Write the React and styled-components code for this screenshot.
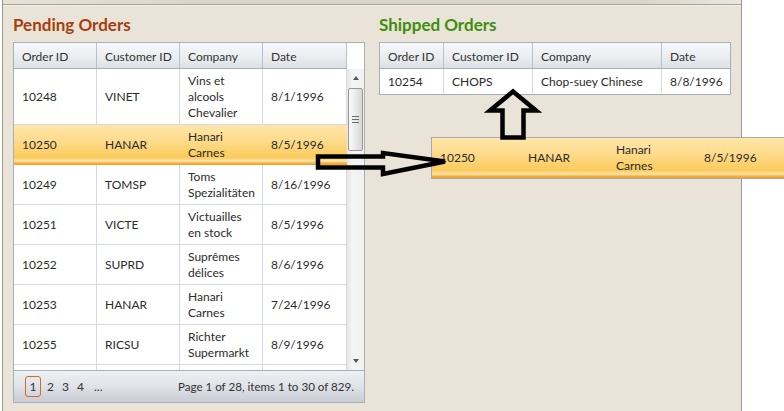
import React from 'react';
import styled, { createGlobalStyle } from 'styled-components';

// shared tones
const lineColor = '#d5dbe5';
const frameColor = '#a6afbc';
const selectedFill =
  'linear-gradient(to bottom, #ffe6a9 0%, #fedb8c 40%, #fbca5a 82%, #fde7b4 90%, #f8b446 95%, #f09a1c 100%)';

const GlobalStyle = createGlobalStyle`
  html, body { margin: 0; padding: 0; background: #f6f3ee; }
  body {
    font-family: Lato, "Open Sans", sans-serif;
    font-size: 12px;
    color: #2b2b2b;
  }
  * { box-sizing: border-box; }
`;

const Stage = styled.div`
  position: relative;
  width: 784px;
  height: 411px;
  overflow: hidden;
  padding-left: 2px;
  background: #fff;
`;

const Window = styled.div`
  width: 740px;
  height: 411px;
  background: #eae3d7;
  border-left: 1px solid #9d9785;
  border-right: 1px solid #9d9785;
  display: flex;
  flex-direction: column;
`;

const TopBar = styled.div`
  height: 5px;
  background: linear-gradient(to right, #e6e2d9, #d9d4c8 30%, #d9d4c8 85%, #e9e7e0);
  border-bottom: 1px solid #a7a190;
  box-shadow: 0 1px 0 #f5f1ea;
`;

const Content = styled.div`
  display: flex;
  gap: 14px;
  padding: 0 10px;
`;

const Panel = styled.div`
  width: 352px;
  display: flex;
  flex-direction: column;
`;

const Title = styled.h2`
  margin: 0 0 7px;
  padding-top: 10px;
  font-size: 17px;
  line-height: 20px;
  font-weight: 700;
  color: ${(p) => p.$color};
`;

const Grid = styled.div`
  border: 1px solid ${frameColor};
  background: #fff;
  display: flex;
  flex-direction: column;
`;

const ScrollArea = styled.div`
  display: flex;
`;

const Table = styled.div`
  width: ${(p) => p.$width}px;
  display: flex;
  flex-direction: column;
`;

const Header = styled.div`
  display: grid;
  grid-template-columns: ${(p) => p.$cols};
  height: 26px;
  border-bottom: 1px solid ${frameColor};
  background: linear-gradient(to bottom, #f7f8fa 0%, #eceef2 50%, #dde0e5 100%);
`;

const HeadCell = styled.div`
  display: flex;
  align-items: center;
  padding: 1px 0 0 8px;
  border-right: 1px solid #b9c0cb;
  color: #333;
  white-space: nowrap;
  &:last-child { border-right: ${(p) => (p.$edge ? '1px solid #b9c0cb' : 'none')}; }
`;

const Body = styled.div`
  height: ${(p) => p.$height}px;
  overflow: hidden;
`;

const Row = styled.div`
  display: grid;
  grid-template-columns: ${(p) => p.$cols};
  height: ${(p) => p.$height}px;
  border-bottom: ${(p) =>
    p.$selected || p.$flat ? 'none' : `1px solid ${lineColor}`};
  background: ${(p) => (p.$selected ? selectedFill : '#fff')};
`;

const Cell = styled.div`
  display: flex;
  flex-direction: column;
  justify-content: center;
  padding-left: 8px;
  line-height: 16px;
  white-space: nowrap;
  overflow: hidden;
  border-right: ${(p) => (p.$plain ? 'none' : `1px solid ${lineColor}`)};
  &:last-child { border-right: ${(p) => (p.$edge ? `1px solid ${lineColor}` : 'none')}; }
`;

const Scrollbar = styled.div`
  width: 17px;
  display: flex;
  flex-direction: column;
`;

const ScrollGap = styled.div`
  height: 26px;
  background: #fff;
`;

const Track = styled.div`
  flex: 1;
  display: flex;
  flex-direction: column;
  background: linear-gradient(to right, #e6e6e6, #f4f4f4 30%, #f2f2f2);
`;

const ArrowBtn = styled.div`
  height: 18px;
  display: flex;
  align-items: center;
  justify-content: center;
  &::before {
    content: '';
    border-left: 3.5px solid transparent;
    border-right: 3.5px solid transparent;
    ${(p) => (p.$down ? 'border-top' : 'border-bottom')}: 4px solid #555;
  }
`;

const Thumb = styled.div`
  height: 63px;
  margin: 1px 1px 0;
  border: 1px solid #979797;
  border-radius: 2px;
  background: linear-gradient(to right, #fafafa, #ececec 45%, #d6d6d6);
  display: flex;
  flex-direction: column;
  align-items: center;
  justify-content: center;
  gap: 2px;
`;

const Grip = styled.span`
  width: 7px;
  height: 1px;
  background: #6a6a6a;
`;

const TrackFill = styled.div`
  flex: 1;
`;

const Pager = styled.div`
  height: 32px;
  border-top: 1px solid ${frameColor};
  background: linear-gradient(to bottom, #eef0f3 0%, #dfe2e7 50%, #c8ccd3 100%);
  display: flex;
  align-items: center;
  padding: 0 10px 0 11px;
  line-height: 16px;
  color: #333;
`;

const PageBox = styled.span`
  width: 16px;
  height: 21px;
  margin-right: 2px;
  display: flex;
  align-items: center;
  justify-content: center;
  border: 1px solid ${(p) => (p.$current ? '#cf6b25' : 'transparent')};
  border-radius: 3px;
`;

const PageNum = styled.span`
  width: 15px;
  text-align: center;
`;

const More = styled.span`
  padding-left: 6px;
`;

const PageInfo = styled.span`
  margin-left: auto;
  white-space: nowrap;
  font-size: 11.6px;
`;

const DragCue = styled.div`
  position: absolute;
  left: 431px;
  top: 137px;
  width: 356px;
  height: 42px;
  border: 1px solid #a9a9a9;
  background: ${selectedFill};
  display: grid;
  grid-template-columns: repeat(4, 88px);
`;

const CueCell = styled.div`
  display: flex;
  flex-direction: column;
  justify-content: center;
  padding-left: 8px;
  line-height: 16px;
  white-space: nowrap;
`;

const Arrows = styled.svg`
  position: absolute;
  left: 0;
  top: 0;
  pointer-events: none;
`;

const pendingCols = '83px 83px 83px 84px';
const shippedCols = '64px 89px 129px 68px';
const headers = ['Order ID', 'Customer ID', 'Company', 'Date'];

const pending = [
  { id: '10248', cust: 'VINET', company: ['Vins et', 'alcools', 'Chevalier'], date: '8/1/1996', h: 56 },
  { id: '10250', cust: 'HANAR', company: ['Hanari', 'Carnes'], date: '8/5/1996', h: 40, selected: true },
  { id: '10249', cust: 'TOMSP', company: ['Toms', 'Spezialitäten'], date: '8/16/1996', h: 40 },
  { id: '10251', cust: 'VICTE', company: ['Victuailles', 'en stock'], date: '8/5/1996', h: 40 },
  { id: '10252', cust: 'SUPRD', company: ['Suprêmes', 'délices'], date: '8/6/1996', h: 40 },
  { id: '10253', cust: 'HANAR', company: ['Hanari', 'Carnes'], date: '7/24/1996', h: 40 },
  { id: '10255', cust: 'RICSU', company: ['Richter', 'Supermarkt'], date: '8/9/1996', h: 40 },
  { id: '10256', cust: 'WELLI', company: ['Wellington', 'Importadora'], date: '7/15/1996', h: 40 },
];

function Lines({ lines }) {
  return lines.map((l) => <span key={l}>{l}</span>);
}

function PendingGrid() {
  return (
    <Grid>
      <ScrollArea>
        <Table $width={333}>
          <Header $cols={pendingCols}>
            {headers.map((h) => (
              <HeadCell key={h} $edge>{h}</HeadCell>
            ))}
          </Header>
          <Body $height={301}>
            {pending.map((r) => (
              <Row key={r.id + r.date} $cols={pendingCols} $height={r.h} $selected={r.selected}>
                <Cell $plain={r.selected}>{r.id}</Cell>
                <Cell $plain={r.selected}>{r.cust}</Cell>
                <Cell $plain={r.selected}><Lines lines={r.company} /></Cell>
                <Cell $plain={r.selected} $edge={!r.selected}>{r.date}</Cell>
              </Row>
            ))}
          </Body>
        </Table>
        <Scrollbar>
          <ScrollGap />
          <Track>
            <ArrowBtn />
            <Thumb>
              <Grip />
              <Grip />
              <Grip />
            </Thumb>
            <TrackFill />
            <ArrowBtn $down />
          </Track>
        </Scrollbar>
      </ScrollArea>
      <Pager>
        <PageBox $current>1</PageBox>
        <PageNum>2</PageNum>
        <PageNum>3</PageNum>
        <PageNum>4</PageNum>
        <More>...</More>
        <PageInfo>Page 1 of 28, items 1 to 30 of 829.</PageInfo>
      </Pager>
    </Grid>
  );
}

function ShippedGrid() {
  return (
    <Grid>
      <Table $width={350}>
        <Header $cols={shippedCols}>
          {headers.map((h) => (
            <HeadCell key={h}>{h}</HeadCell>
          ))}
        </Header>
        <Row $cols={shippedCols} $height={25} $flat>
          <Cell>10254</Cell>
          <Cell>CHOPS</Cell>
          <Cell>Chop-suey Chinese</Cell>
          <Cell>8/8/1996</Cell>
        </Row>
      </Table>
    </Grid>
  );
}

export default function App() {
  return (
    <>
      <GlobalStyle />
      <Stage>
        <Window>
          <TopBar />
          <Content>
            <Panel>
              <Title $color="#a53f0e">Pending Orders</Title>
              <PendingGrid />
            </Panel>
            <Panel>
              <Title $color="#3f8e10">Shipped Orders</Title>
              <ShippedGrid />
            </Panel>
          </Content>
        </Window>

        <DragCue>
          <CueCell>10250</CueCell>
          <CueCell>HANAR</CueCell>
          <CueCell><span>Hanari</span><span>Carnes</span></CueCell>
          <CueCell>8/5/1996</CueCell>
        </DragCue>

        <Arrows width="784" height="411" viewBox="0 0 784 411">
          <polygon
            points="318,156.5 383,156.5 383,153 445,161.5 383,174 383,167.5 318,167.5"
            fill="none"
            stroke="#000"
            strokeWidth="4.5"
          />
          <polygon
            points="513,91.5 536,110.5 523.5,110.5 523.5,137.5 502.5,137.5 502.5,110.5 490,110.5"
            fill="none"
            stroke="#000"
            strokeWidth="4.5"
          />
        </Arrows>
      </Stage>
    </>
  );
}
